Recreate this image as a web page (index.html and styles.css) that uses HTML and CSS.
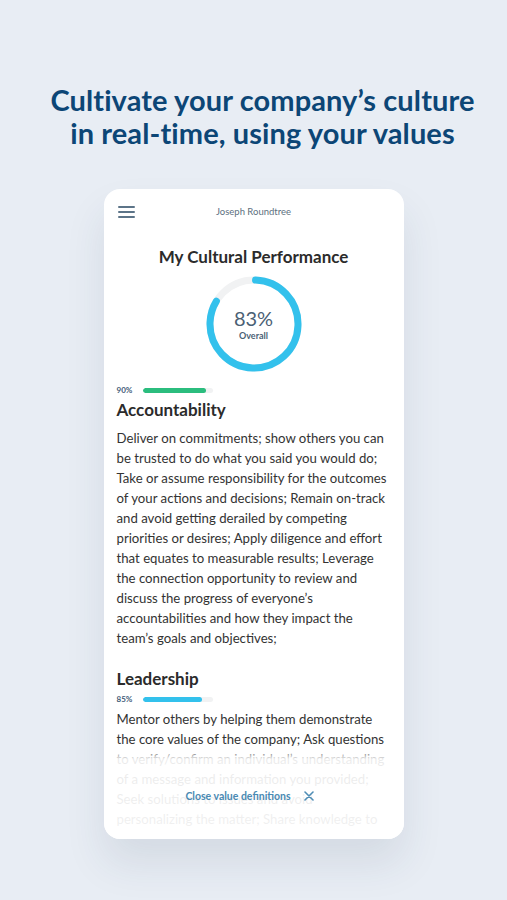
FILE: index.html
```html
<!DOCTYPE html>
<html>
<head>
<meta charset="utf-8">
<link rel="stylesheet" href="styles.css">
</head>
<body>
<main class="screen">
  <h1 class="headline">Cultivate your company’s culture<br>in real-time, using your values</h1>
  <section class="card">
    <header class="card-top">
      <span class="menu" aria-label="menu"><i></i><i></i><i></i></span>
      <span class="user">Joseph Roundtree</span>
    </header>
    <h2 class="title">My Cultural Performance</h2>
    <div class="ring">
      <svg width="96" height="96" viewBox="0 0 96 96">
        <circle cx="48" cy="48" r="44" fill="none" stroke="#f1f2f3" stroke-width="7"/>
        <circle cx="48" cy="48" r="44" fill="none" stroke="#33c1ec" stroke-width="7" stroke-linecap="round" stroke-dasharray="229.5 400" transform="rotate(-88 48 48)"/>
      </svg>
      <div class="ring-label">
        <span class="ring-value">83%</span>
        <span class="ring-sub">Overall</span>
      </div>
    </div>

    <div class="value first">
      <div class="meter"><span class="pct">90%</span><span class="track"><span class="fill green" style="width:90%"></span></span></div>
      <h3 class="value-name">Accountability</h3>
      <p class="desc">Deliver on commitments; show others you can be trusted to do what you said you would do; Take or assume responsibility for the outcomes of your actions and decisions; Remain on-track and avoid getting derailed by competing priorities or desires; Apply diligence and effort that equates to measurable results; Leverage the connection opportunity to review and discuss the progress of everyone’s accountabilities and how they impact the team’s goals and objectives;</p>
    </div>

    <div class="value second">
      <h3 class="value-name">Leadership</h3>
      <div class="meter"><span class="pct">85%</span><span class="track"><span class="fill blue" style="width:85%"></span></span></div>
      <p class="desc">Mentor others by helping them demonstrate the core values of the company; Ask questions to verify/confirm an individual’s understanding of a message and information you provided; Seek solutions to issues and avoid personalizing the matter; Share knowledge to</p>
    </div>

    <div class="fade">
      <button class="close">Close value definitions
        <svg class="x" width="10" height="10" viewBox="0 0 10 10"><path d="M1 1 L9 9 M9 1 L1 9" stroke="#4f8db5" stroke-width="1.6" stroke-linecap="round" fill="none"/></svg>
      </button>
    </div>
  </section>
</main>
</body>
</html>
```
FILE: styles.css
```css
* { box-sizing: border-box; }
html, body { margin: 0; padding: 0; }
body {
  background: #e8edf4;
  font-family: Lato, "Open Sans", sans-serif;
  width: 507px;
  height: 900px;
  overflow: hidden;
}
.screen {
  display: flex;
  flex-direction: column;
  align-items: center;
  padding-top: 83px;
}
.headline {
  margin: 0 0 0 18px;
  font-family: Lato, sans-serif;
  font-weight: 700;
  font-size: 29px;
  line-height: 33px;
  color: #0c4676;
  text-align: center;
  letter-spacing: 0.1px;
}
.card {
  position: relative;
  margin-top: 40px;
  width: 300px;
  height: 650px;
  background: #fff;
  border-radius: 16px;
  box-shadow: 0 24px 40px rgba(40, 60, 90, 0.10);
  overflow: hidden;
  padding: 16px 13px 0 13px;
  display: flex;
  flex-direction: column;
}
.card-top {
  position: relative;
  height: 12px;
  display: flex;
  align-items: center;
  justify-content: center;
}
.menu {
  position: absolute;
  left: 1px;
  top: 1px;
  display: flex;
  flex-direction: column;
  gap: 3px;
}
.menu i {
  display: block;
  width: 17px;
  height: 2px;
  background: #5c7488;
  border-radius: 1px;
}
.user {
  font-size: 9.5px;
  color: #5d7080;
}
.title {
  margin: 30px 0 0;
  text-align: center;
  font-size: 17px;
  font-weight: 700;
  color: #2b2b2b;
  line-height: 20px;
}
.ring {
  position: relative;
  width: 96px;
  height: 96px;
  margin: 9px auto 0;
}
.ring svg { display: block; }
.ring-label {
  position: absolute;
  inset: 0;
  display: flex;
  flex-direction: column;
  align-items: center;
  justify-content: center;
  padding-top: 1px;
}
.ring-value {
  font-size: 20px;
  line-height: 22px;
  color: #4b5f75;
}
.ring-sub {
  font-size: 9px;
  line-height: 14px;
  color: #4b5f75;
  font-weight: 700;
}
.value { display: flex; flex-direction: column; }
.first { margin-top: 12px; }
.meter {
  display: flex;
  align-items: center;
  gap: 7px;
  height: 12px;
}
.pct {
  font-size: 8px;
  font-weight: 700;
  color: #3f5c78;
  width: 19px;
}
.track {
  width: 70px;
  height: 5px;
  border-radius: 3px;
  background: #f1f2f3;
  overflow: hidden;
}
.fill { display: block; height: 100%; border-radius: 3px; }
.fill.green { background: #2bbd7e; }
.fill.blue { background: #33c1ec; }
.value-name {
  margin: 4px 0 0;
  font-size: 17px;
  line-height: 20px;
  font-weight: 700;
  color: #2b2b2b;
}
.desc {
  margin: 8px 0 0;
  font-size: 13.2px;
  line-height: 20px;
  color: #333;
}
.second { margin-top: 21px; }
.second .value-name { margin: 0; }
.second .meter { margin-top: 4px; }
.second .desc { margin-top: 4px; }
.fade {
  position: absolute;
  left: 0;
  right: 0;
  bottom: 0;
  height: 91px;
  background: linear-gradient(to bottom, rgba(255,255,255,0) 0%, rgba(255,255,255,0.9) 12%, rgba(255,255,255,0.93) 100%);
  display: flex;
  justify-content: center;
  padding-top: 41px;
}
.close {
  border: 0;
  background: none;
  padding: 0;
  font-family: Lato, sans-serif;
  font-size: 10.5px;
  font-weight: 700;
  color: #4a8ab3;
  height: 14px;
  display: flex;
  align-items: center;
  gap: 13px;
  margin-left: -8px;
}
.x { display: block; }
```
